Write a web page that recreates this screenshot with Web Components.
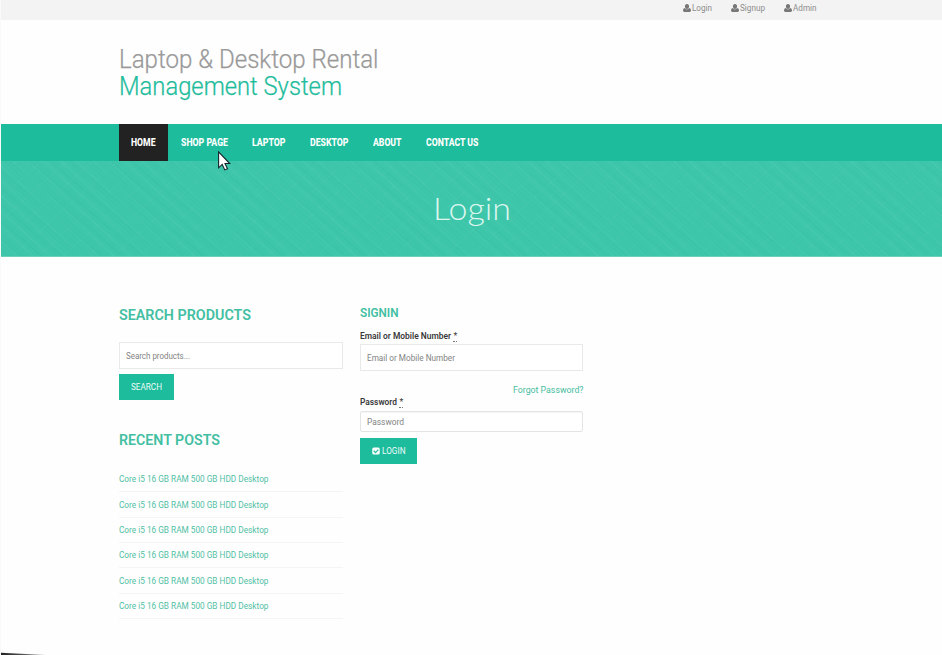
<!DOCTYPE html>
<html lang="en">
<head>
<meta charset="utf-8">
<title>Laptop &amp; Desktop Rental Management System</title>
<style>
html,body{margin:0;background:#fefefe}
body{width:942px;height:655px;overflow:hidden;position:relative;font-family:Roboto,"Liberation Sans",sans-serif;--brand:#1dbc9c;--link:#46bd9f}
</style>
</head>
<body>
<rental-page></rental-page>
<script>
const define = (name, html, after) => {
  const t = document.createElement('template');
  t.innerHTML = html;
  customElements.define(name, class extends HTMLElement {
    connectedCallback() {
      if (this.shadowRoot) return;
      this.attachShadow({mode: 'open'}).append(t.content.cloneNode(true));
      if (after) after(this, this.shadowRoot);
    }
  });
};

// A single line of text condensed or widened to the width in its "w" attribute.
define('fit-text', `<style>
:host{display:block;white-space:nowrap;flex:none}
span{display:inline-block;transform-origin:0 50%}
</style><span><slot></slot></span>`, (el, root) => {
  const span = root.querySelector('span');
  const w = +el.getAttribute('w');
  const natural = span.getBoundingClientRect().width;
  el.style.width = w + 'px';
  if (natural) span.style.transform = `scaleX(${w / natural})`;
});

define('user-link', `<style>
:host{display:flex;align-items:center;font-size:8.6px;line-height:12px;color:#8c8c8c}
svg{width:8px;height:8px;margin-right:1px;fill:#777}
</style><svg viewBox="0 0 16 16"><path d="M8 0C5.400 0 3.800 1.900 3.800 4.600c0 2.700 1.700 5.400 4.200 5.400s4.200-2.700 4.200-5.400C12.200 1.900 10.600 0 8 0zM4.200 8C1.200 8.300 0 10.500 0 13.200 0 14.900 1.100 16 2.800 16h10.400c1.700 0 2.800-1.100 2.800-2.800 0-2.700-1.200-4.900-4.200-5.200C10.800 10 9.500 10.800 8 10.800S5.200 10 4.200 8z"/></svg><slot></slot>`);

define('top-bar', `<style>
:host{display:flex;height:20px;background:#f3f3f3;box-sizing:border-box;padding:2px 0 0 683px;align-items:flex-start}
user-link{width:48px}user-link+user-link{width:53px}
</style><user-link><fit-text w="20">Login</fit-text></user-link><user-link><fit-text w="25">Signup</fit-text></user-link><user-link><fit-text w="23.5">Admin</fit-text></user-link>`);

define('site-brand', `<style>
:host{display:block;height:104px;box-sizing:border-box;padding:26px 0 0 119px;font-size:25px;line-height:27px;font-weight:300;color:#999;-webkit-text-stroke:.25px}
.b{color:var(--brand)}
</style><fit-text w="259.5">Laptop &amp; Desktop Rental</fit-text><fit-text class="b" w="223">Management System</fit-text>`);

define('nav-item', `<style>
:host{display:flex;align-items:center;height:37px;padding:0 12.300px;color:#fff;font-size:10.200px;font-weight:800}
:host([active]){background:#222}
</style><slot></slot>`);

define('main-nav', `<style>
:host{display:flex;height:37px;padding-left:119.200px;background:var(--brand)}
</style>` + [['HOME', 24.5], ['SHOP PAGE', 47], ['LAPTOP', 33.5], ['DESKTOP', 38.5], ['ABOUT', 28.5], ['CONTACT US', 52.5]]
  .map(([t, w], i) => `<nav-item${i ? '' : ' active'}><fit-text w="${w}">${t}</fit-text></nav-item>`).join(''));

define('page-banner', `<style>
:host{display:flex;justify-content:center;height:96px;box-sizing:border-box;padding-top:27px;padding-left:2px;color:#dcf6ef;
font:300 32px/40px Lato,sans-serif;border-bottom:1px solid #6bd0ba;
background:
repeating-linear-gradient(43deg,#ffffff08 0 1px,#fff0 2px 5px,#00806506 6px,#fff0 7px 11px),
repeating-linear-gradient(40deg,#00806508 0 1px,#fff0 2px 7px,#ffffff06 8px,#fff0 9px 13px),
repeating-linear-gradient(-42deg,#fff0 0 9px,#ffffff06 10px,#fff0 11px 17px),
#3dc6aa}
</style><fit-text w="78">Login</fit-text>`);

define('section-title', `<style>
:host{display:block;color:#42bfa2;font-weight:600}
</style><slot></slot>`);

define('text-field', `<style>
:host{display:flex;align-items:center;box-sizing:border-box;width:224px;height:27px;padding-left:6px;border:1px solid #e9e9e9;background:#fff;color:#838383;font-size:8.800px}
:host([small]){height:21px;border-radius:2px;border-color:#e4e4e4;box-shadow:inset 0 1px 1px #0000000a}
</style><slot></slot>`);

define('action-button', `<style>
:host{display:flex;align-items:center;justify-content:center;height:26px;background:var(--brand);color:#effbf8;font-size:9px;font-weight:400}
</style><slot></slot>`);

define('field-label', `<style>
:host{display:flex;font-size:8.800px;line-height:12px;font-weight:600;color:#3a3a3a}
abbr{margin-left:2px;width:4px;height:11px;border-bottom:1px dotted #777;font-weight:400;text-align:center}
</style><slot></slot><abbr>*</abbr>`);

define('post-list', `<style>
:host{display:block;color:#4fc0a4;font-size:8.900px}
div{height:25.350px;box-sizing:border-box;border-bottom:1px solid #f5f5f5;line-height:13px;padding-top:6.500px}
</style>` + '<div><fit-text w="149.5">Core i5 16 GB RAM 500 GB HDD Desktop</fit-text></div>'.repeat(6));

define('side-bar', `<style>
:host{display:block;width:224px}
section-title{font-size:14px;line-height:20px}
text-field{margin-top:17px}
action-button{width:55px;margin-top:5px}
.r{margin-top:30px}
post-list{margin-top:16.900px}
</style>
<section-title><fit-text w="132">SEARCH PRODUCTS</fit-text></section-title>
<text-field><fit-text w="64">Search products...</fit-text></text-field>
<action-button><fit-text w="31">SEARCH</fit-text></action-button>
<section-title class="r"><fit-text w="101">RECENT POSTS</fit-text></section-title>
<post-list></post-list>`);

define('sign-in-form', `<style>
:host{display:block;width:223px}
section-title{font-size:12px;line-height:16px}
field-label{margin-top:9px}
text-field{width:223px;margin-top:2px}
.f{display:flex;justify-content:flex-end;color:var(--link);font-size:9.200px;line-height:12px;margin-top:13px}
.p{margin-top:0}
text-field[small]{margin-top:3px}
action-button{width:57px;margin-top:6px}
svg{width:8px;height:8px;margin-right:1.500px}
</style>
<section-title><fit-text w="38.5">SIGNIN</fit-text></section-title>
<field-label><fit-text w="91">Email or Mobile Number</fit-text></field-label>
<text-field><fit-text w="88">Email or Mobile Number</fit-text></text-field>
<div class="f"><fit-text w="70.5">Forgot Password?</fit-text></div>
<field-label class="p"><fit-text w="37">Password</fit-text></field-label>
<text-field small><fit-text w="37">Password</fit-text></text-field>
<action-button><svg viewBox="0 0 16 16"><rect x="0.500" y="1" width="15" height="14" rx="3" fill="#fff"/><path d="M3.500 7.500l3.500 3.700 5.700-6" fill="none" stroke="#1dbc9c" stroke-width="2.300"/></svg><fit-text w="23.5">LOGIN</fit-text></action-button>`);

define('mouse-pointer', `<style>
:host{position:absolute;left:218px;top:151px;width:13px;height:20px}
svg{display:block;width:13px;height:20px}
</style><svg viewBox="0 0 13 20"><path d="M.6.900v15.900l3.600-3.400 2.600 5.500 2.700-1.200-2.500-5.200h4.700z" fill="#fff" stroke="#15252c" stroke-width="1.100"/></svg>`);

// Dark sliver and pale line at the left edge of the page.
define('page-edge', `<style>
:host{position:absolute;left:0;top:0;width:60px;height:655px;pointer-events:none}
svg{display:block}
</style><svg width="60" height="655"><rect width="1" height="655" fill="#fafafa"/><defs><linearGradient id="g"><stop offset="0" stop-color="#222"/><stop offset=".5" stop-color="#555"/><stop offset="1" stop-color="#aaa"/></linearGradient></defs><path d="M1 652.700L46 655H1z" fill="url(#g)"/></svg>`);

define('rental-page', `<style>
:host{display:block}
main{display:flex;gap:17.400px;padding-left:119px;align-items:flex-start}
side-bar{padding-top:48px}
sign-in-form{padding-top:48px}
</style>
<top-bar></top-bar><site-brand></site-brand><main-nav></main-nav><page-banner></page-banner>
<main><side-bar></side-bar><sign-in-form></sign-in-form></main>
<mouse-pointer></mouse-pointer><page-edge></page-edge>`);
</script>
</body>
</html>
